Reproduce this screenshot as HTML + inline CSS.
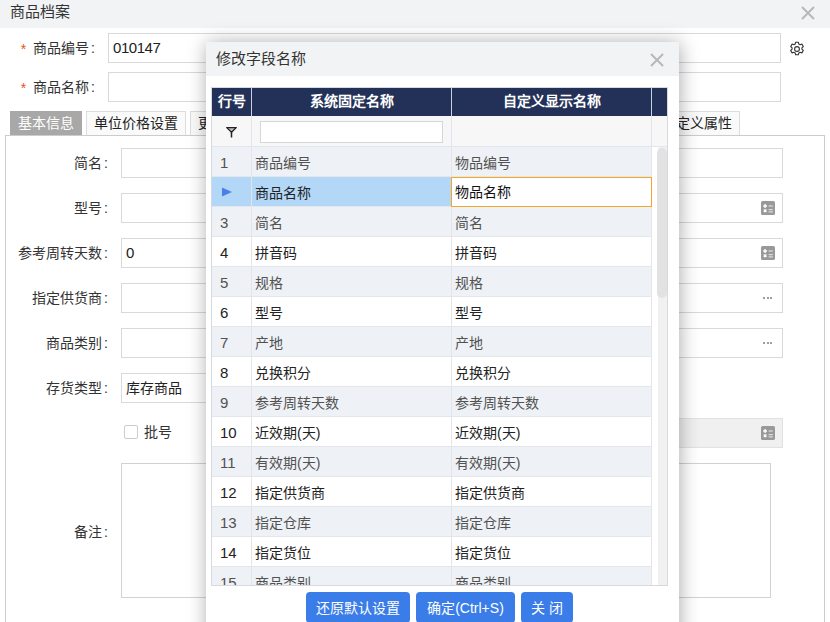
<!DOCTYPE html>
<html lang="zh-CN">
<head>
<meta charset="utf-8">
<title>商品档案</title>
<style>
*{box-sizing:border-box;margin:0;padding:0}
html,body{width:830px;height:622px;overflow:hidden;background:#fff}
body{font-family:"Liberation Sans",sans-serif;font-size:14px;color:#333;position:relative}
.abs{position:absolute}
.titlebar{left:0;top:0;width:830px;height:28px;background:#f2f3f5}
.titlebar .t{left:10px;top:0;line-height:23px;font-size:15px;color:#333}
.inp{position:absolute;height:30px;border:1px solid #d9d9d9;background:#fff;border-radius:0;line-height:28px;padding-left:5px;font-size:14px;color:#222;white-space:nowrap}
.lbl{position:absolute;height:30px;line-height:30px;font-size:14px;color:#333;text-align:right;white-space:nowrap}
.req{color:#e8501f;margin-right:7px;position:relative;top:1px}
.lbl.c::after{content:":";margin-left:2px}
.tab{position:absolute;top:111px;height:25px;border:1px solid #ddd;border-bottom:none;background:#fafafa;line-height:23px;font-size:14px;color:#222;text-align:center;white-space:nowrap;overflow:hidden}
.tab.on{background:#a8a8a8;color:#fff;border-color:#a8a8a8}
.panel{left:5px;top:135px;width:820px;height:520px;border:1px solid #ccc;background:#fff}
.calc{position:absolute;width:14px;height:14px;border-radius:2px;background:#999}
.dots{position:absolute;width:10px;height:2px}
.dots i{position:absolute;top:0;width:2px;height:2px;background:#979eae}
/* modal */
.modal{left:206px;top:42px;width:473px;height:600px;background:#fff;box-shadow:1px 1px 18px rgba(0,0,0,.33)}
.mhead{left:0;top:0;width:473px;height:34px;background:#f2f3f5;line-height:34px;padding-left:10px;font-size:15px;color:#333}
.grid{left:5px;top:45px;width:457px;height:499px;border:1px solid #d6d9de;overflow:hidden;background:#fff}
.hrow{left:0;top:0;height:28px;background:#233158;color:#fff;font-weight:bold;text-align:center;line-height:27px;font-size:14px;border-right:1px solid #c9d1e0}
.frow{top:28px;height:31px;background:#f7f7f8;border-right:1px solid #dfe6f0;border-bottom:1px solid #dfe6f0}
.row{position:absolute;left:0;width:440px;height:30px;line-height:31px;font-size:14px;white-space:nowrap;border-bottom:1px solid #e3e6eb}
.row span{position:absolute;top:0;height:29px}
.row .c1{left:0;width:40px;padding-left:8px;border-right:1px solid #e3e5e9;font-size:15px}
.row .c2{left:40px;width:200px;padding-left:3px;border-right:1px solid #e3e5e9}
.row .c3{left:240px;width:200px;padding-left:3px;border-right:1px solid #e3e5e9}
.row .c2,.row .c3{line-height:33px}
.row.o{background:#eef1f6;color:#525252}
.row.e{background:#fff;color:#222}
.row.sel{background:#b3d7f7;color:#222}
.btn{position:absolute;top:550px;height:31px;background:#3b7de8;color:#fff;border-radius:4px;font-size:14px;line-height:33px;text-align:center;white-space:nowrap}
</style>
</head>
<body>
<!-- base window -->
<div class="abs titlebar"><div class="abs t">商品档案</div>
<svg class="abs" style="left:801px;top:5.500px" width="14" height="14" viewBox="0 0 14 14"><path d="M1 1L13 13M13 1L1 13" stroke="#b8b8b8" stroke-width="2" fill="none"/></svg>
</div>

<div class="lbl c" style="left:0;top:33px;width:95px"><span class="req">*</span>商品编号</div>
<div class="inp" style="left:108px;top:33px;width:673px;font-size:15px;letter-spacing:-0.45px;padding-left:4px">010147</div>
<svg class="abs" style="left:789px;top:40.500px" width="16" height="16" viewBox="0 0 16 16"><g fill="none" stroke="#333" stroke-width="1.100"><circle cx="8" cy="8" r="2.4"/><path d="M6.6 1.2h2.8l.4 1.9 1.3.7 1.8-.7 1.4 2.4-1.4 1.3v1.4l1.4 1.3-1.4 2.4-1.8-.7-1.3.7-.4 1.9H6.6l-.4-1.9-1.3-.7-1.8.7-1.4-2.4 1.4-1.3V6.800l-1.400-1.300 1.400-2.400 1.800.7 1.300-.7z" stroke-linejoin="round"/></g></svg>

<div class="lbl c" style="left:0;top:72px;width:95px"><span class="req">*</span>商品名称</div>
<div class="inp" style="left:108px;top:72px;width:673px"></div>

<div class="tab on" style="left:10px;width:72px">基本信息</div>
<div class="tab" style="left:86px;width:100px">单位价格设置</div>
<div class="tab" style="left:190px;width:100px;text-align:left;padding-left:7px">更多信息设置</div>
<div class="tab" style="left:654px;width:86px">自定义属性</div>

<div class="abs panel"></div>

<div class="lbl c" style="left:0;top:148px;width:108px">简名</div>
<div class="inp" style="left:121px;top:148px;width:662px"></div>
<div class="lbl c" style="left:0;top:193px;width:108px">型号</div>
<div class="inp" style="left:121px;top:193px;width:662px"></div>
<div class="lbl c" style="left:0;top:238px;width:108px">参考周转天数</div>
<div class="inp" style="left:121px;top:238px;width:662px;font-size:15px;padding-left:4px">0</div>
<div class="lbl c" style="left:0;top:283px;width:108px">指定供货商</div>
<div class="inp" style="left:121px;top:283px;width:662px"></div>
<div class="lbl c" style="left:0;top:328px;width:108px">商品类别</div>
<div class="inp" style="left:121px;top:328px;width:662px"></div>
<div class="lbl c" style="left:0;top:373px;width:108px">存货类型</div>
<div class="inp" style="left:121px;top:373px;width:300px;padding-left:4px">库存商品</div>
<div class="abs" style="left:124px;top:425px;width:14px;height:14px;border:1px solid #ccc;border-radius:2px;background:#fff"></div>
<div class="lbl" style="left:144px;top:417px;text-align:left">批号</div>
<div class="inp" style="left:500px;top:418px;width:283px;background:#f0f0f0;border-color:#e2e2e2"></div>
<div class="lbl c" style="left:0;top:517px;width:108px">备注</div>
<div class="inp" style="left:121px;top:463px;width:650px;height:135px;border-color:#ccd4d4"></div>

<!-- calc icons -->
<svg class="abs" style="left:761px;top:201px" width="14" height="14" viewBox="0 0 14 14"><rect width="14" height="14" rx="1.6" fill="#999"/><path d="M2.200 5h3.800M4.100 3.100v3.800M2.800 8.500l2.600 2.600M5.400 8.500L2.800 11.100" stroke="#fff" stroke-width="1.350" fill="none"/><path d="M7.600 5h4.200M7.600 8.700h4.200M7.600 10.900h4.200" stroke="#fff" stroke-width="0.900" fill="none" opacity=".9"/></svg>
<svg class="abs" style="left:761px;top:246px" width="14" height="14" viewBox="0 0 14 14"><rect width="14" height="14" rx="1.6" fill="#999"/><path d="M2.200 5h3.800M4.100 3.100v3.800M2.800 8.500l2.600 2.600M5.400 8.500L2.800 11.100" stroke="#fff" stroke-width="1.350" fill="none"/><path d="M7.600 5h4.200M7.600 8.700h4.200M7.600 10.900h4.200" stroke="#fff" stroke-width="0.900" fill="none" opacity=".9"/></svg>
<svg class="abs" style="left:761px;top:426px" width="14" height="14" viewBox="0 0 14 14"><rect width="14" height="14" rx="1.6" fill="#999"/><path d="M2.200 5h3.800M4.100 3.100v3.800M2.800 8.500l2.600 2.600M5.400 8.500L2.800 11.100" stroke="#fff" stroke-width="1.350" fill="none"/><path d="M7.600 5h4.200M7.600 8.700h4.200M7.600 10.900h4.200" stroke="#fff" stroke-width="0.900" fill="none" opacity=".9"/></svg>
<div class="dots" style="left:763px;top:297.300px"><i style="left:0"></i><i style="left:3.500px"></i><i style="left:7px"></i></div>
<div class="dots" style="left:763px;top:342.300px"><i style="left:0"></i><i style="left:3.500px"></i><i style="left:7px"></i></div>

<!-- modal -->
<div class="abs modal">
  <div class="abs mhead">修改字段名称</div>
  <svg class="abs" style="left:444px;top:11px" width="14" height="14" viewBox="0 0 14 14"><path d="M1 1L13 13M13 1L1 13" stroke="#b8b8b8" stroke-width="2" fill="none"/></svg>
  <div class="abs grid">
    <div class="abs hrow" style="left:0;width:40px">行号</div>
    <div class="abs hrow" style="left:40px;width:200px">系统固定名称</div>
    <div class="abs hrow" style="left:240px;width:200px">自定义显示名称</div>
    <div class="abs hrow" style="left:440px;width:16px;border-right:none"></div>
    <div class="abs frow" style="left:0;width:40px"></div>
    <div class="abs frow" style="left:40px;width:200px"></div>
    <div class="abs frow" style="left:240px;width:200px"></div>
    <div class="abs frow" style="left:440px;width:16px;border-right:none"></div>
    <svg class="abs" style="left:14px;top:39px" width="12" height="11" viewBox="0 0 12 11"><path d="M0.700 0.600h9.600L5.500 5.200z" stroke="#222" stroke-width="1.250" fill="#bdbdbd" stroke-linejoin="round"/><path d="M5.500 5v5.500" stroke="#222" stroke-width="1.500" fill="none"/></svg>
    <div class="abs" style="left:48px;top:33px;width:183px;height:22px;border:1px solid #d3d6db;background:#fff"></div>

    <div class="row o" style="top:59px"><span class="c1">1</span><span class="c2">商品编号</span><span class="c3">物品编号</span></div>
    <div class="row sel" style="top:89px"><span class="c1"></span><span class="c2">商品名称</span><span class="c3"></span></div>
    <div class="row o" style="top:119px"><span class="c1">3</span><span class="c2">简名</span><span class="c3">简名</span></div>
    <div class="row e" style="top:149px"><span class="c1">4</span><span class="c2">拼音码</span><span class="c3">拼音码</span></div>
    <div class="row o" style="top:179px"><span class="c1">5</span><span class="c2">规格</span><span class="c3">规格</span></div>
    <div class="row e" style="top:209px"><span class="c1">6</span><span class="c2">型号</span><span class="c3">型号</span></div>
    <div class="row o" style="top:239px"><span class="c1">7</span><span class="c2">产地</span><span class="c3">产地</span></div>
    <div class="row e" style="top:269px"><span class="c1">8</span><span class="c2">兑换积分</span><span class="c3">兑换积分</span></div>
    <div class="row o" style="top:299px"><span class="c1">9</span><span class="c2">参考周转天数</span><span class="c3">参考周转天数</span></div>
    <div class="row e" style="top:329px"><span class="c1">10</span><span class="c2">近效期(天)</span><span class="c3">近效期(天)</span></div>
    <div class="row o" style="top:359px"><span class="c1">11</span><span class="c2">有效期(天)</span><span class="c3">有效期(天)</span></div>
    <div class="row e" style="top:389px"><span class="c1">12</span><span class="c2">指定供货商</span><span class="c3">指定供货商</span></div>
    <div class="row o" style="top:419px"><span class="c1">13</span><span class="c2">指定仓库</span><span class="c3">指定仓库</span></div>
    <div class="row e" style="top:449px"><span class="c1">14</span><span class="c2">指定货位</span><span class="c3">指定货位</span></div>
    <div class="row o" style="top:479px"><span class="c1">15</span><span class="c2">商品类别</span><span class="c3">商品类别</span></div>

    <svg class="abs" style="left:10px;top:98.500px" width="10" height="10" viewBox="0 0 10 10"><path d="M0 0.500L10 5L0 9.500z" fill="#4a7fe8"/></svg>
    <div class="abs" style="left:239px;top:89px;width:201px;height:30px;border:1px solid #f5a623;background:#fff;line-height:29px;padding-left:3px;color:#111;font-size:14px">物品名称</div>

    <div class="abs" style="left:446px;top:59px;width:10px;height:440px;background:#f1f1f1"></div>
    <div class="abs" style="left:445px;top:59.700px;width:10px;height:150.500px;background:#e2e2e2;border-radius:5px"></div>
  </div>
  <div class="btn" style="left:100px;width:104px">还原默认设置</div>
  <div class="btn" style="left:210px;width:99px">确定(Ctrl+S)</div>
  <div class="btn" style="left:315px;width:52px">关 闭</div>
</div>
</body>
</html>
